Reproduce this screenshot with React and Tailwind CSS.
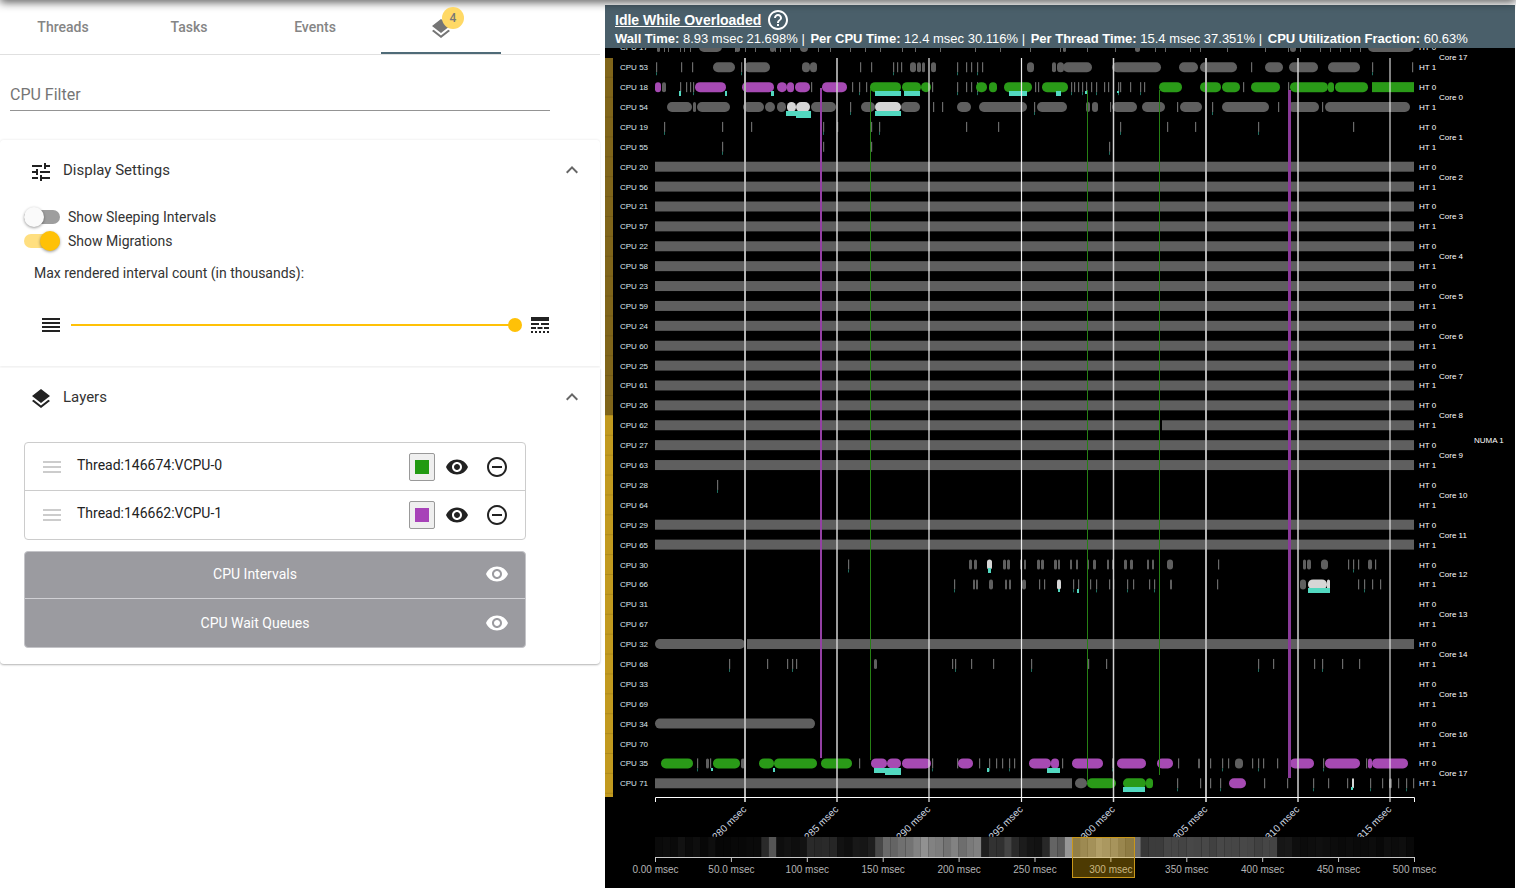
import { MdTune, MdLayers, MdExpandLess, MdVisibility, MdRemoveCircleOutline, MdMenu, MdReorder, MdLineStyle, MdHelpOutline } from 'react-icons/md';

const GRAY = '#5f5f5f';
const PURPLE = '#a64ab3';
const GREEN = '#2a9a18';
const LIGHT = '#d6d6d6';
const TEAL = '#52d8c0';

const CPU_ROWS = [53, 18, 54, 19, 55, 20, 56, 21, 57, 22, 58, 23, 59, 24, 60, 25, 61, 26, 62, 27, 63, 28, 64, 29, 65, 30, 66, 31, 67, 32, 68, 33, 69, 34, 70, 35, 71];
const rowY = (i) => 67.25 + i * 19.89;

const full = [[655, 1414, GRAY, 0]];

// pills: [from, to, colour], ticks: x positions, teal: [from, to, top, height]
const TRACKS = {
  53: {
    pills: [[713, 735], [744, 770], [802, 810], [810, 817], [910, 916], [917, 921], [922, 925], [931, 936], [1027, 1034], [1052, 1056], [1057, 1064], [1063, 1092], [1112, 1161], [1179, 1198], [1200, 1237], [1265, 1283], [1289, 1318], [1328, 1360]],
    ticks: [656, 681, 692, 741, 860, 871, 893, 897, 901, 957, 966, 971, 977, 982, 1251, 1372, 1412],
  },
  18: {
    pills: [[655, 661, PURPLE], [662, 666], [695, 726, PURPLE], [742, 774, PURPLE], [777, 787, PURPLE], [787, 794, PURPLE], [795, 810, PURPLE], [822, 847, PURPLE], [870, 901, GREEN], [902, 921, GREEN], [921, 931, GREEN], [976, 987, GREEN], [989, 997, GREEN], [1004, 1032, GREEN], [1042, 1068, GREEN], [1159, 1182, GREEN], [1200, 1221, GREEN], [1222, 1240, GREEN], [1251, 1280, GREEN], [1290, 1328, GREEN], [1328, 1334, GREEN], [1335, 1368, GREEN], [1372, 1414, GREEN, 0]],
    ticks: [680, 686, 690, 693, 811, 852, 859, 866, 932, 957, 966, 971, 977, 1035, 1038, 1071, 1074, 1078, 1082, 1086, 1091, 1096, 1104, 1108, 1118, 1120, 1130, 1140, 1144, 1243, 1288],
    teal: [[679, 681, 91, 5], [725, 727, 91, 5], [771, 774, 91, 5], [875, 901, 91, 5], [904, 920, 91, 5], [1009, 1027, 91, 5], [1056, 1061, 91, 5], [1085, 1087, 91, 3], [1117, 1119, 91, 2]],
  },
  54: {
    pills: [[667, 692], [693, 696], [697, 730], [743, 764], [765, 775], [777, 786], [787, 796, LIGHT], [796, 810, LIGHT], [811, 836], [861, 875], [875, 901, LIGHT], [901, 920], [957, 971], [979, 1027], [1037, 1067], [1086, 1090], [1092, 1098], [1112, 1137], [1142, 1165], [1180, 1202], [1222, 1269], [1288, 1319], [1325, 1410]],
    ticks: [850, 933, 942, 1034, 1110, 1177, 1212, 1278, 1322],
    teal: [[786, 811, 111, 5], [796, 811, 113, 5], [875, 901, 111, 5]],
  },
  19: { ticks: [664, 722, 751, 823, 837, 871, 879, 966, 998, 1120, 1167, 1195, 1258, 1353] },
  55: { ticks: [722, 823, 871, 1109] },
  20: { pills: full }, 56: { pills: full }, 21: { pills: full }, 57: { pills: full },
  22: { pills: full }, 58: { pills: full }, 23: { pills: full }, 59: { pills: full },
  24: { pills: full }, 60: { pills: full }, 25: { pills: full }, 61: { pills: full },
  26: { pills: full }, 27: { pills: full }, 63: { pills: full }, 29: { pills: full }, 65: { pills: full },
  62: { pills: [[655, 1159, GRAY, 0], [1162, 1414, GRAY, 0]] },
  28: { ticks: [717] },
  30: {
    pills: [[969, 972], [974, 977], [987, 992, LIGHT], [1003, 1006], [1007, 1010], [1020, 1022], [1024, 1026], [1037, 1040], [1041, 1044], [1054, 1057], [1058, 1060], [1070, 1072], [1076, 1078], [1087, 1089], [1093, 1096], [1107, 1109], [1112, 1114], [1124, 1127], [1130, 1133], [1147, 1149], [1152, 1154], [1167, 1173], [1303, 1306], [1307, 1311], [1321, 1328], [1368, 1372]],
    ticks: [848, 1218, 1348, 1353, 1358, 1375],
    teal: [[988, 991, 568, 5]],
  },
  66: {
    pills: [[973, 975], [976, 978], [989, 993], [1005, 1007], [1009, 1011], [1022, 1026], [1057, 1061, LIGHT], [1170, 1172], [1300, 1306], [1308, 1327, LIGHT], [1327, 1330, LIGHT]],
    ticks: [954, 1039, 1044, 1073, 1078, 1090, 1096, 1109, 1113, 1127, 1133, 1149, 1154, 1217, 1358, 1364, 1372, 1380],
    teal: [[1308, 1330, 588, 5], [1058, 1060, 589, 3], [1077, 1079, 589, 4]],
  },
  32: { pills: [[655, 745], [747, 1414, GRAY, 0]] },
  68: { pills: [[874, 877]], ticks: [729, 767, 787, 792, 796, 952, 955, 971, 993, 1031, 1088, 1106, 1258, 1273, 1314, 1322, 1342, 1359] },
  34: { pills: [[655, 815]] },
  35: {
    pills: [[661, 693, GREEN], [706, 709], [713, 740, GREEN], [741, 745], [759, 774, GREEN], [774, 817, GREEN], [821, 852, GREEN], [871, 887, PURPLE], [887, 901, PURPLE], [902, 931, PURPLE], [958, 973, PURPLE], [1029, 1051, PURPLE], [1051, 1059, PURPLE], [1072, 1103, PURPLE], [1117, 1146, PURPLE], [1157, 1173, PURPLE], [1198, 1200], [1235, 1243], [1290, 1314, PURPLE], [1325, 1360, PURPLE], [1368, 1372, PURPLE], [1372, 1408, PURPLE]],
    ticks: [697, 710, 859, 932, 957, 979, 989, 996, 1002, 1009, 1014, 1062, 1112, 1178, 1210, 1222, 1228, 1252, 1258, 1263, 1277, 1323, 1366],
    teal: [[874, 901, 768, 5], [885, 901, 770, 5], [1047, 1060, 768, 5], [711, 713, 768, 3], [773, 775, 768, 4], [987, 989, 768, 4]],
  },
  71: {
    pills: [[655, 1072, GRAY, 0], [1075, 1087], [1087, 1116, GREEN], [1123, 1146, GREEN], [1146, 1153, GREEN], [1229, 1246, PURPLE], [1352, 1354, LIGHT], [1389, 1392]],
    ticks: [1177, 1200, 1210, 1220, 1264, 1287, 1313, 1328, 1347, 1370, 1382, 1398, 1406, 1413],
    teal: [[1123, 1145, 787, 5], [1351, 1353, 787, 3]],
  },
};

const TOP_PILLS = [[657, 660], [699, 722], [735, 740], [770, 775], [800, 808], [1063, 1066], [1135, 1140], [1290, 1296], [1368, 1414]];
const TOP_TICKS = [664, 668, 680, 684, 690, 735, 745, 755, 775, 780, 790, 818, 830, 850, 865, 880, 902, 915, 940, 975, 1000, 1030, 1060, 1087, 1115, 1155, 1165, 1190, 1200, 1227, 1265, 1288, 1300, 1320, 1330, 1340, 1350, 1360];

const V_LINES = [[745, 2, '#b4b4b4'], [837, 1.5, '#d2d2d2'], [929, 1.2, '#eeeeee'], [1021.5, 1.2, '#f0f0f0'], [1113.5, 1.5, '#d2d2d2'], [1206, 2, '#b4b4b4'], [1298, 1.5, '#d2d2d2'], [1390, 1, '#ffffff']];
const V_LABELS = ['280', '285', '290', '295', '300', '305', '310', '315'];

const HEAT = [10, 12, 10, 18, 10, 14, 8, 14, 6, 6, 8, 8, 10, 10, 42, 85, 14, 18, 14, 18, 42, 40, 42, 38, 18, 14, 24, 22, 30, 72, 105, 100, 112, 115, 130, 145, 130, 125, 115, 130, 110, 122, 128, 30, 50, 48, 68, 42, 28, 20, 18, 40, 100, 90, 150, 100, 115, 125, 145, 135, 130, 110, 95, 110, 55, 60, 60, 70, 70, 68, 72, 70, 72, 65, 72, 70, 70, 72, 70, 65, 70, 68, 22, 24, 14, 12, 14, 16, 14, 12, 10, 12, 10, 10, 12, 8, 14, 12, 14, 8];

const AXIS = ['0.00', '50.0', '100', '150', '200', '250', '300', '350', '400', '450', '500'];

const FONT = { fontFamily: '"Liberation Sans", Arial, sans-serif' };

const Pill = ({ x1, x2, y, color = GRAY, radius = 5 }) => (
  <rect x={x1} y={y - 5} width={x2 - x1} height={10} rx={Math.min(radius, (x2 - x1) / 2)} fill={color} />
);

const Chart = () => (
  <svg viewBox="605 48 910 840" width={910} height={840} className="block" style={FONT}>
    <rect x={605} y={58} width={8} height={357} fill="#80651a" />
    <rect x={605} y={415} width={8} height={382} fill="#c29a1f" />
    {CPU_ROWS.map((cpu, i) => (
      <line key={cpu} x1={605} x2={613} y1={rowY(i) + 10} y2={rowY(i) + 10} stroke="#000" strokeOpacity={0.1} />
    ))}

    {/* clipped row above the first one */}
    <text x={620} y={50} fontSize={8} fill="#dde6ee">CPU 17</text>
    <text x={1419} y={50} fontSize={8} fill="#ffffff">HT 0</text>
    {TOP_PILLS.map(([a, b]) => <Pill key={a} x1={a} x2={b} y={47} />)}
    {TOP_TICKS.map((x) => <rect key={x} x={x} y={42} width={1} height={10} fill="#666" />)}

    {CPU_ROWS.map((cpu, i) => {
      const y = rowY(i);
      const track = TRACKS[cpu] ?? {};
      return (
        <g key={cpu}>
          <text x={620} y={y + 3} fontSize={8} fill="#dde6ee">CPU {cpu}</text>
          <text x={1419} y={y + 3} fontSize={8} fill="#ffffff">HT {i % 2 === 1 ? 0 : 1}</text>
          {(track.ticks ?? []).map((x, k) => (
            <g key={x}>
              <rect x={x} y={y - 5} width={1.2} height={10} fill="#6a6a6a" />
              {/* short wait marks hanging under some of the ticks */}
              {k % 3 === 0 && <rect x={x} y={y + 5} width={1} height={3} fill="#1f6f60" />}
            </g>
          ))}
          {(track.pills ?? []).map(([a, b, color, radius], k) => (
            <Pill key={k} x1={a} x2={b} y={y} color={color} radius={radius} />
          ))}
          {(track.teal ?? []).map(([a, b, top, h], k) => (
            <rect key={k} x={a} y={top} width={b - a} height={h} fill={TEAL} />
          ))}
        </g>
      );
    })}

    {Array.from({ length: 19 }, (_, i) => (
      <text key={i} x={1439} y={60.3 + i * 39.78} fontSize={8} fill="#ffffff">
        Core {i === 0 ? 17 : i - 1}
      </text>
    ))}
    <text x={1474} y={443} fontSize={8} fill="#ffffff">NUMA 1</text>

    {V_LINES.map(([x, w, color]) => (
      <line key={x} x1={x} x2={x} y1={58} y2={802} stroke={color} strokeWidth={w} />
    ))}
    <rect x={820} y={88} width={2} height={670} fill="#9440a4" />
    <rect x={870} y={88} width={1} height={672} fill="#268015" />
    <rect x={1087} y={90} width={1} height={692} fill="#268015" />
    <rect x={1159} y={90} width={1} height={685} fill="#268015" />
    <rect x={1288} y={90} width={3} height={688} fill="#8a3a98" />

    {/* top axis */}
    <path d="M655.5 802V797.5H1414.5V802" fill="none" stroke="#ffffff" />
    {V_LINES.map(([x], i) => (
      <text key={x} transform={`translate(${x + 2} 810) rotate(-45)`} textAnchor="end" fontSize={10} fill="#cfd8e0">
        {V_LABELS[i]} msec
      </text>
    ))}

    {/* overview strip */}
    {HEAT.map((v, i) => (
      <rect key={i} x={655 + i * 7.59} y={837} width={7.7} height={20} fill={`rgb(${v},${v},${v})`} />
    ))}
    <path d="M655.5 862V857.5H1414.5V862" fill="none" stroke="#c8c8c8" />
    {AXIS.map((label, i) => (
      <g key={label}>
        <line x1={655.5 + i * 75.9} x2={655.5 + i * 75.9} y1={857} y2={862} stroke="#c8c8c8" />
        <text x={655.5 + i * 75.9} y={873} textAnchor="middle" fontSize={10} fill="#b4b4b4">{label} msec</text>
      </g>
    ))}
    <rect x={1072.5} y={837.5} width={62} height={40} fill="#ffc107" fillOpacity={0.3} stroke="#c9971a" />
  </svg>
);

const Toggle = ({ on, label }) => (
  <div className="flex items-center h-6">
    <div className="relative w-9 h-3.5 rounded-full" style={{ background: on ? '#ffdf80' : '#9e9e9e' }}>
      <div
        className={`absolute top-[-3px] w-5 h-5 rounded-full shadow-[0_1px_3px_rgba(0,0,0,0.4)] ${on ? 'left-4 bg-[#ffc107]' : 'left-0 bg-[#fafafa]'}`}
      />
    </div>
    <span className="ml-2 text-[14px] text-[#333]">{label}</span>
  </div>
);

const LayerRow = ({ name, color, last }) => (
  <div className={`flex items-center h-12 pl-[15px] pr-[16px] ${last ? '' : 'border-b border-[#ccc]'}`}>
    <MdMenu size={24} className="text-[#ccc]" />
    <span className="ml-[13px] text-[14px] text-[#222] pb-[3px]">{name}</span>
    <div className="ml-auto flex items-center">
      <div className="w-[26px] h-[28px] flex items-center justify-center bg-[#efefef] border border-[#999] rounded-[2px]">
        <div className="w-[14px] h-[14px]" style={{ background: color }} />
      </div>
      <MdVisibility size={24} className="ml-[10px] text-[#222]" />
      <MdRemoveCircleOutline size={24} className="ml-4 text-[#222]" />
    </div>
  </div>
);

const GrayRow = ({ name, last }) => (
  <div className={`relative flex items-center justify-center pr-10 ${last ? 'h-[48px]' : 'h-[47px] pb-[2px] border-b border-[#d0d0d4]'}`}>
    <span className="text-[14px] text-white">{name}</span>
    <MdVisibility size={24} className="absolute right-4 text-white" />
  </div>
);

const SectionHead = ({ icon, title }) => (
  <div className="flex items-center h-6 pl-[29px] pr-[16px]">
    {icon}
    <span className="ml-[10px] text-[15px] text-[#333]">{title}</span>
    <MdExpandLess size={24} className="ml-auto text-[#666]" />
  </div>
);

const LeftPanel = () => (
  <div className="w-[604px] shrink-0 pr-1 h-full">
    <div className="flex h-[55px] border-b border-[#e0e0e0] w-[600px]">
      {['Threads', 'Tasks', 'Events'].map((t) => (
        <div key={t} className="w-[126px] flex items-center justify-center text-[14px] font-medium text-[#858585]">{t}</div>
      ))}
      <div className="relative w-[126px] flex items-center justify-center">
        <MdLayers size={24} className="text-[#757575] mt-[4px]" />
        <div className="absolute left-[64px] top-[7px] w-[22px] h-[22px] rounded-full bg-[#ffd966] flex items-center justify-center text-[12px] font-medium text-[#777]">4</div>
        <div className="absolute left-[3px] w-[120px] bottom-0 h-[2px] bg-[#4f6b78]" />
      </div>
    </div>

    <div className="ml-[10px] w-[540px] h-[56px] border-b border-[#949494] pt-[30px] text-[16px] leading-5 text-[#757575]">CPU Filter</div>

    <section className="mt-[29px] h-[226px] w-[600px] rounded-t-[4px] shadow-[0_-1px_2px_rgba(0,0,0,0.05),0_1px_2px_rgba(0,0,0,0.07)] pt-[18px]">
      <SectionHead icon={<MdTune size={24} className="text-[#222] mt-1" />} title="Display Settings" />
      <div className="mt-[23px] pl-[24px]">
        <Toggle label="Show Sleeping Intervals" />
        <Toggle on label="Show Migrations" />
      </div>
      <div className="mt-[10px] pl-[34px] text-[14px] leading-5 text-[#333]">Max rendered interval count (in thousands):</div>
      <div className="mt-[30px] flex items-center pl-[39px]">
        <MdReorder size={24} className="text-[#222]" />
        <div className="relative ml-[8px] w-[444px] h-[2px] bg-[#ffc107]">
          <div className="absolute right-[-7px] top-[-6px] w-[14px] h-[14px] rounded-full bg-[#ffc107]" />
        </div>
        <MdLineStyle size={24} className="ml-[13px] text-[#222]" />
      </div>
    </section>

    <section className="mt-[2px] h-[296px] w-[600px] rounded-b-[4px] shadow-[0_1px_2px_rgba(0,0,0,0.3)] pt-[17px]">
      <SectionHead icon={<MdLayers size={24} className="text-[#222] mt-1" />} title="Layers" />
      <div className="ml-[24px] w-[502px] mt-[33px] border border-[#ccc] rounded-[4px]">
        <LayerRow name="Thread:146674:VCPU-0" color="#229a12" />
        <LayerRow name="Thread:146662:VCPU-1" color="#a742b8" last />
      </div>
      <div className="ml-[24px] w-[502px] mt-[11px] bg-[#9b9ba0] border border-[#c4c4c8] rounded-[4px]">
        <GrayRow name="CPU Intervals" />
        <GrayRow name="CPU Wait Queues" last />
      </div>
    </section>
  </div>
);

export default function App() {
  return (
    <div className="relative flex w-[1516px] h-[888px] overflow-hidden bg-white" style={{ fontFamily: 'Roboto, sans-serif' }}>
      {/* toolbar above is cut off, only its shadow is left */}
      <div className="absolute top-[-10px] left-0 right-0 h-[10px] shadow-[0_2px_10px_rgba(0,0,0,0.7)]" />
      <LeftPanel />
      <div className="flex flex-col w-[910px] mt-[5px] ml-[1px]">
        <div className="h-[43px] bg-[#4a5f6a] pl-[10px] text-white" style={FONT}>
          <div className="flex items-center h-[24px] mt-[3px]">
            <span className="text-[14px] font-bold underline">Idle While Overloaded</span>
            <MdHelpOutline size={24} className="ml-[5px]" />
          </div>
          <div className="text-[13px] leading-[16px] whitespace-pre mt-[-1px]">
            <b>Wall Time:</b> 8.93 msec 21.698% | <b className="ml-[2px]">Per CPU Time:</b> 12.4 msec 30.116% | <b className="ml-[2px]">Per Thread Time:</b> 15.4 msec 37.351% | <b className="ml-[2px]">CPU Utilization Fraction:</b> 60.63%
          </div>
        </div>
        <div className="bg-black h-[840px] w-[910px]">
          <Chart />
        </div>
      </div>
    </div>
  );
}
